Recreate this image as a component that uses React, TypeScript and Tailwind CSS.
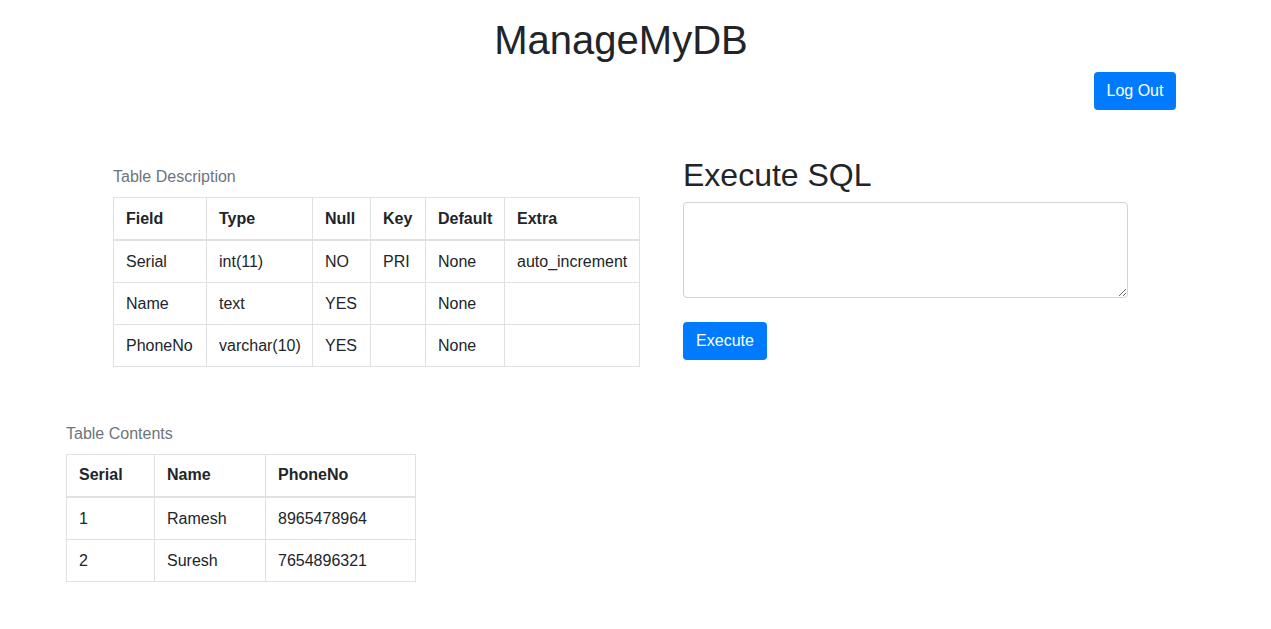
import React from "react";

const descCols = [
  { name: "Field", w: "w-[93px]" },
  { name: "Type", w: "w-[106px]" },
  { name: "Null", w: "w-[58px]" },
  { name: "Key", w: "w-[55px]" },
  { name: "Default", w: "w-[79px]" },
  { name: "Extra", w: "w-[135px]" },
];

const descRows = [
  ["Serial", "int(11)", "NO", "PRI", "None", "auto_increment"],
  ["Name", "text", "YES", "", "None", ""],
  ["PhoneNo", "varchar(10)", "YES", "", "None", ""],
];

const contentRows = [
  ["1", "Ramesh", "8965478964"],
  ["2", "Suresh", "7654896321"],
];

const th = "border border-[#dee2e6] border-b-2 px-3 py-[8.5px] text-left font-bold align-bottom leading-6 whitespace-nowrap";
const td = "border border-[#dee2e6] px-3 pt-[9px] pb-[8px] align-top leading-6 whitespace-nowrap";

const App = () => {
  return (
    <div className="min-h-screen bg-white text-[#212529] font-['Liberation_Sans',Arial,sans-serif] text-base">
      <h1 className="pt-4 mb-2 text-center pr-[29px] text-[40px] leading-[48px] font-normal">ManageMyDB</h1>
      <div className="flex justify-end pr-[95px]">
        <button className="h-[38px] w-[82px] rounded bg-[#007bff] text-white leading-6">Log Out</button>
      </div>

      <div className="flex mt-[46px] pl-[113px]">
        <div className="w-[570px] pt-[8.5px]">
          <div className="text-[#6c757d] leading-6 mb-[8.5px]">Table Description</div>
          <table className="border-collapse table-fixed w-[526px]">
            <thead>
              <tr>
                {descCols.map((h) => (
                  <th key={h.name} className={`${th} ${h.w}`}>{h.name}</th>
                ))}
              </tr>
            </thead>
            <tbody>
              {descRows.map((row, i) => (
                <tr key={i}>
                  {row.map((c, j) => (
                    <td key={j} className={td}>{c}</td>
                  ))}
                </tr>
              ))}
            </tbody>
          </table>
        </div>

        <div className="w-[445px]">
          <h2 className="text-[32px] leading-[38.4px] mb-2">Execute SQL</h2>
          <textarea className="block w-full h-[96px] border border-[#ced4da] rounded px-3 py-1.5 resize-y outline-none" />
          <button className="mt-6 h-[38px] w-[84px] rounded bg-[#007bff] text-white leading-6">Execute</button>
        </div>
      </div>

      <div className="pl-[66px] mt-[54.5px] pb-10">
        <div className="text-[#6c757d] leading-6 mb-[8px]">Table Contents</div>
        <table className="border-collapse table-fixed w-[349px]">
          <thead>
            <tr>
              <th className={`${th} w-[88px]`}>Serial</th>
              <th className={`${th} w-[111px]`}>Name</th>
              <th className={`${th} w-[150px]`}>PhoneNo</th>
            </tr>
          </thead>
          <tbody>
            {contentRows.map((row, i) => (
              <tr key={i}>
                {row.map((c, j) => (
                  <td key={j} className={td}>{c}</td>
                ))}
              </tr>
            ))}
          </tbody>
        </table>
      </div>
    </div>
  );
};

export default App;
